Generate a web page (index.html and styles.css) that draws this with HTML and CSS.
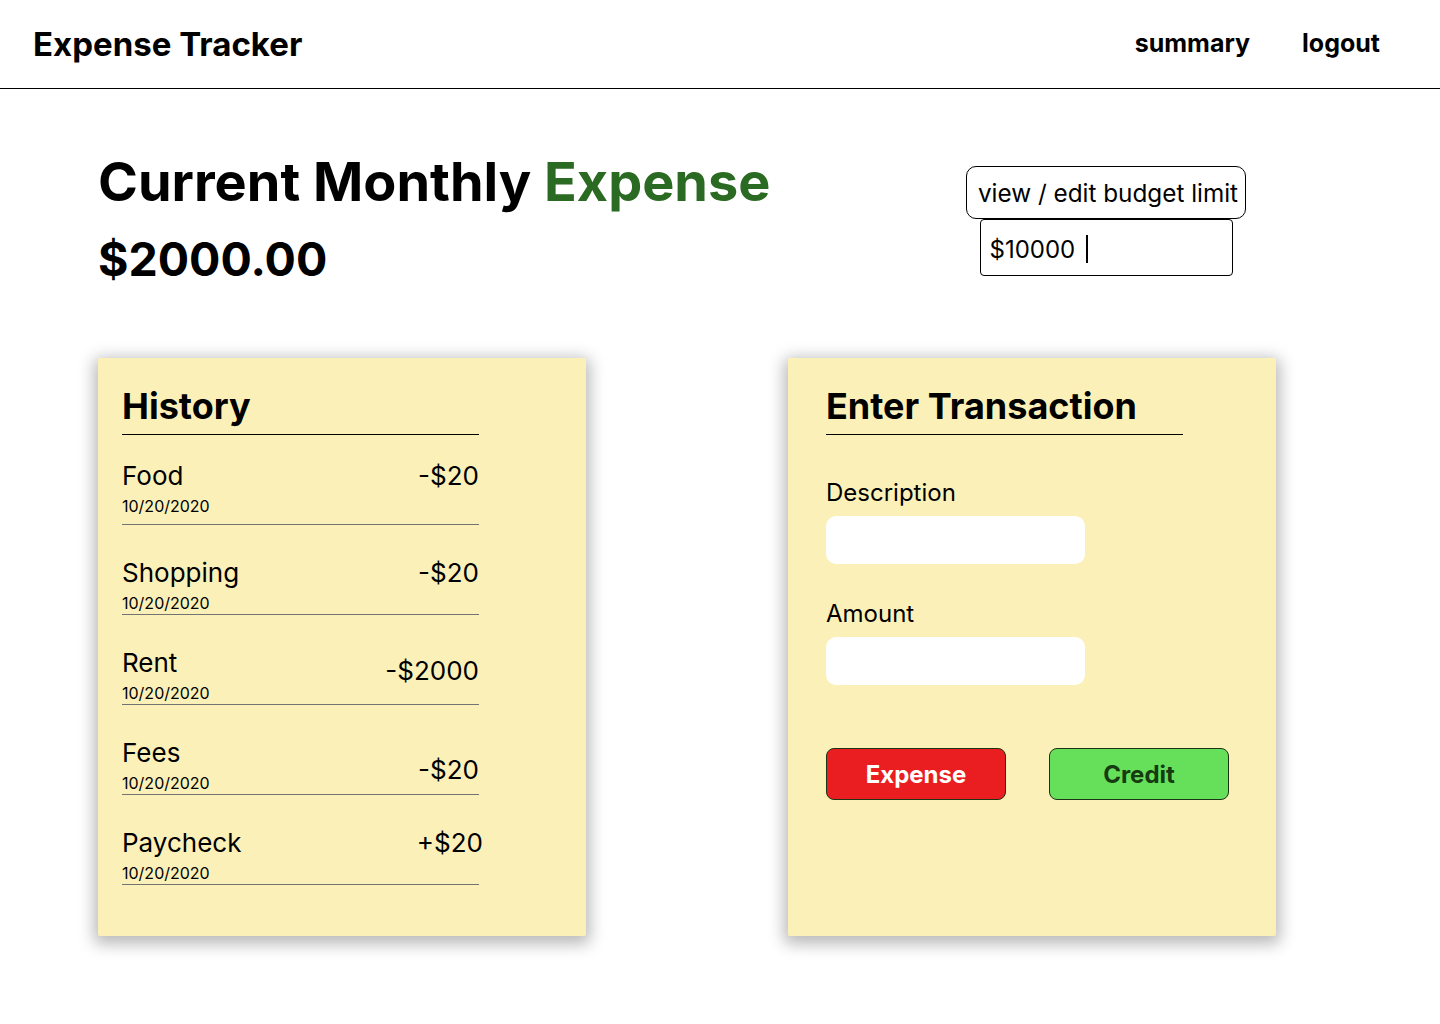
FILE: index.html
```html
<!DOCTYPE html>
<html lang="en">
<head>
<meta charset="utf-8">
<title>Expense Tracker</title>
<link rel="stylesheet" href="styles.css">
</head>
<body>
<header class="topbar">
  <div class="brand">Expense Tracker</div>
  <nav class="nav">
    <a class="nav-link" href="#">summary</a>
    <a class="nav-link" href="#">logout</a>
  </nav>
</header>

<main class="page">
  <section class="summary">
    <div class="totals">
      <h1 class="headline">Current Monthly <span class="accent">Expense</span></h1>
      <div class="total">$2000.00</div>
    </div>
    <div class="budget">
      <button class="budget-btn" type="button">view / edit budget limit</button>
      <div class="budget-input">$10000 <span class="caret"></span></div>
    </div>
  </section>

  <section class="cards">
    <div class="card card--history">
      <h2 class="card-title">History</h2>
      <ul class="history">
        <li class="entry entry--first">
          <span class="entry-name">Food</span>
          <span class="entry-date">10/20/2020</span>
          <span class="entry-amt">-$20</span>
        </li>
        <li class="entry">
          <span class="entry-name">Shopping</span>
          <span class="entry-date">10/20/2020</span>
          <span class="entry-amt">-$20</span>
        </li>
        <li class="entry">
          <span class="entry-name">Rent</span>
          <span class="entry-date">10/20/2020</span>
          <span class="entry-amt entry-amt--drop">-$2000</span>
        </li>
        <li class="entry">
          <span class="entry-name">Fees</span>
          <span class="entry-date">10/20/2020</span>
          <span class="entry-amt entry-amt--mid">-$20</span>
        </li>
        <li class="entry">
          <span class="entry-name">Paycheck</span>
          <span class="entry-date">10/20/2020</span>
          <span class="entry-amt entry-amt--over">+$20</span>
        </li>
      </ul>
    </div>

    <div class="card card--form">
      <h2 class="card-title">Enter Transaction</h2>
      <form class="tx-form">
        <label class="field">
          <span class="field-label">Description</span>
          <input class="field-input" type="text">
        </label>
        <label class="field">
          <span class="field-label">Amount</span>
          <input class="field-input" type="text">
        </label>
        <div class="actions">
          <button class="action action--expense" type="button">Expense</button>
          <button class="action action--credit" type="button">Credit</button>
        </div>
      </form>
    </div>
  </section>
</main>
</body>
</html>
```

FILE: styles.css
```css
* {
  box-sizing: border-box;
}

html, body {
  margin: 0;
  padding: 0;
  background: #ffffff;
}

body {
  font-family: Inter, "Noto Sans", "Liberation Sans", sans-serif;
  color: #000;
  width: 1440px;
  min-height: 1024px;
}

/* ---------- top bar ---------- */
.topbar {
  height: 89px;
  display: flex;
  align-items: center;
  justify-content: space-between;
  padding: 0 60px 0 33px;
  border-bottom: 1px solid #000;
}

.brand {
  font-size: 33px;
  line-height: 40px;
  font-weight: 700;
}

.nav {
  display: flex;
  gap: 52px;
}

.nav-link {
  font-size: 25px;
  line-height: 30px;
  font-weight: 700;
  color: #000;
  text-decoration: none;
  margin-top: -2px;
}

/* ---------- summary ---------- */
.page {
  padding: 61px 0 0 98px;
}

.summary {
  width: 1148px;
  display: flex;
  justify-content: space-between;
  align-items: flex-start;
}

.headline {
  margin: 0;
  font-size: 54px;
  line-height: 64px;
  font-weight: 700;
}

.accent {
  color: #2b6a22;
}

.total {
  margin-top: 16px;
  font-size: 46.5px;
  line-height: 58px;
  font-weight: 700;
}

.budget {
  margin-top: 16px;
  display: flex;
  flex-direction: column;
  align-items: center;
}

.budget-btn {
  width: 280px;
  height: 53px;
  padding: 0 0 0 4px;
  border: 1px solid #000;
  border-radius: 10px;
  background: #fff;
  font-family: inherit;
  font-size: 24.3px;
  color: #000;
  white-space: nowrap;
}

.budget-input {
  width: 253px;
  height: 57px;
  border: 1px solid #000;
  border-radius: 4px;
  padding: 3px 9px 0;
  display: flex;
  align-items: center;
  gap: 4px;
  font-size: 24px;
  white-space: pre;
}

.caret {
  width: 2px;
  height: 28px;
  background: #000;
}

/* ---------- cards ---------- */
.cards {
  margin-top: 70px;
  display: flex;
  gap: 202px;
}

.card {
  width: 488px;
  height: 578px;
  background: #fbf1b8;
  border-radius: 2px;
  box-shadow: 0 4px 16px 4px rgba(0, 0, 0, 0.28);
  padding-top: 26px;
}

.card--history {
  padding-left: 24px;
}

.card--form {
  padding-left: 38px;
}

.card-title {
  width: 357px;
  margin: 0;
  padding-bottom: 6px;
  border-bottom: 1px solid #000;
  font-size: 36px;
  line-height: 44px;
  font-weight: 700;
}

/* history list */
.history {
  list-style: none;
  margin: 0;
  padding: 0;
  width: 357px;
}

.entry {
  height: 90px;
  display: grid;
  grid-template-columns: 1fr auto;
  grid-template-rows: auto auto;
  align-content: end;
  padding-bottom: 1px;
  border-bottom: 1px solid #737373;
}

.entry--first {
  padding-bottom: 8px;
}

.entry-name {
  grid-column: 1;
  grid-row: 1;
  font-size: 26px;
  line-height: 30px;
  margin-bottom: 5px;
}

.entry-date {
  grid-column: 1;
  grid-row: 2;
  font-size: 16px;
  line-height: 20px;
}

.entry-amt {
  grid-column: 2;
  grid-row: 1;
  font-size: 26px;
  line-height: 30px;
  text-align: right;
}

.entry-amt--drop {
  grid-row: 1 / 3;
  align-self: start;
  margin-top: 8px;
}

.entry-amt--mid {
  grid-row: 1 / 3;
  align-self: end;
  margin-bottom: 8px;
}

.entry-amt--over {
  margin-right: -4px;
}

/* transaction form */
.tx-form {
  margin: 0;
  padding-top: 43px;
  display: flex;
  flex-direction: column;
  gap: 35px;
}

.field {
  display: flex;
  flex-direction: column;
  gap: 9px;
}

.field-label {
  font-size: 24px;
  line-height: 29px;
}

.field-input {
  width: 259px;
  height: 48px;
  border: none;
  border-radius: 10px;
  background: #fff;
  font-family: inherit;
  font-size: 20px;
  padding: 0 12px;
}

.actions {
  margin-top: 28px;
  display: flex;
  gap: 43px;
}

.action {
  width: 180px;
  height: 52px;
  border-radius: 8px;
  border: 1px solid #1c3314;
  font-family: inherit;
  font-size: 24px;
  font-weight: 700;
  padding: 0;
}

.action--expense {
  background: #ea1e21;
  color: #fff;
}

.action--credit {
  background: #66e05a;
  color: #163b10;
}
```
